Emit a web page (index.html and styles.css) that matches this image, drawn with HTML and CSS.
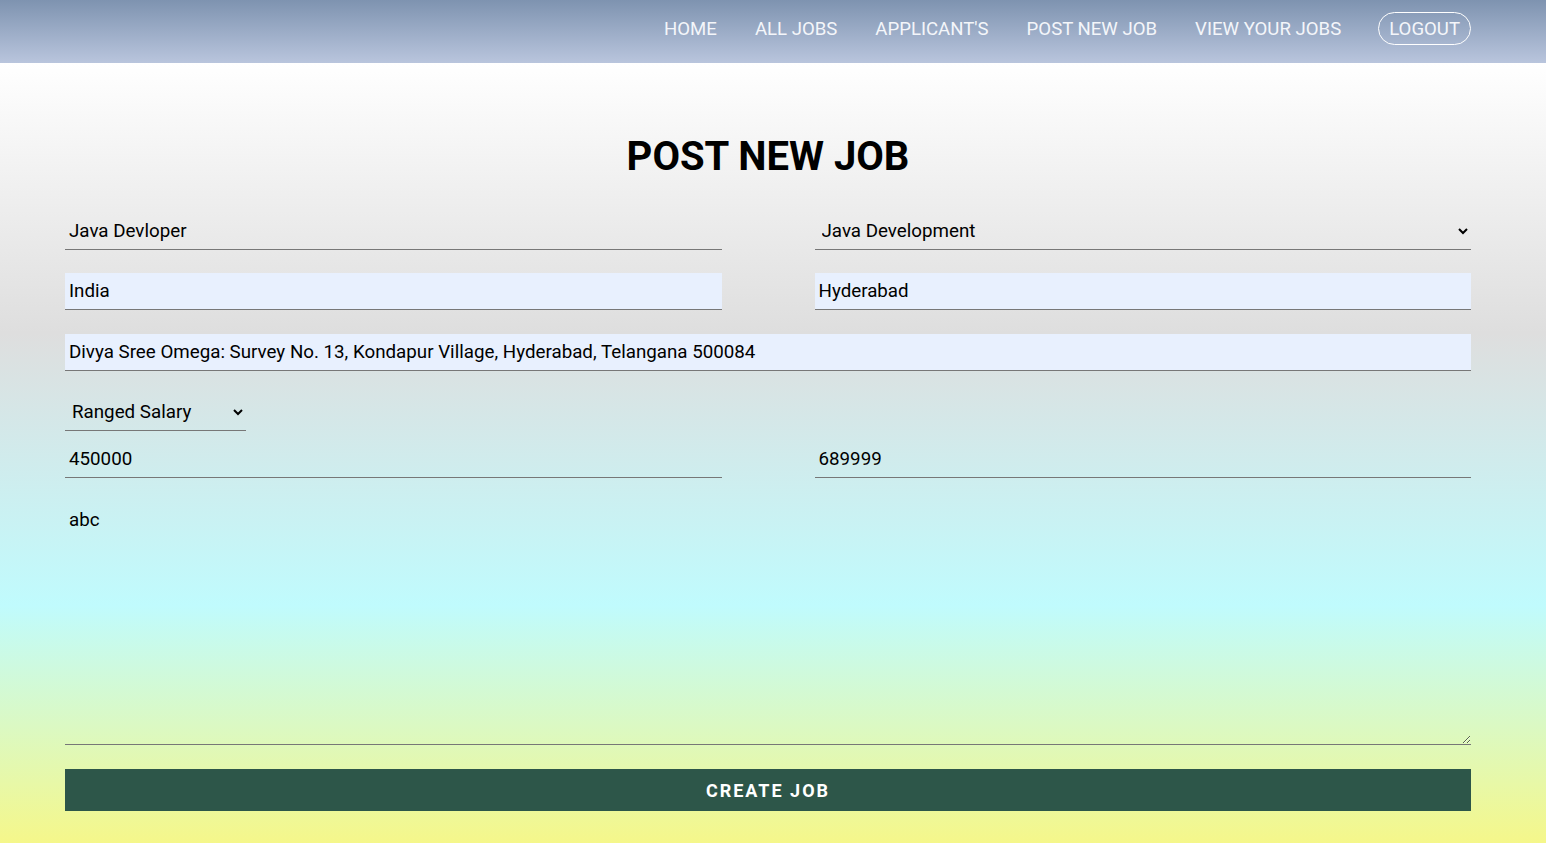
FILE: index.html
```html
<!DOCTYPE html>
<html lang="en">
<head>
<meta charset="utf-8">
<title>Post New Job</title>
<link rel="stylesheet" href="styles.css">
</head>
<body>
<header class="navbar">
  <nav class="nav-links">
    <a class="nav-link" href="#">HOME</a>
    <a class="nav-link" href="#">ALL JOBS</a>
    <a class="nav-link" href="#">APPLICANT'S</a>
    <a class="nav-link" href="#">POST NEW JOB</a>
    <a class="nav-link" href="#">VIEW YOUR JOBS</a>
    <a class="nav-link logout" href="#">LOGOUT</a>
  </nav>
</header>
<main class="page">
  <h1 class="title">POST NEW JOB</h1>
  <form class="job-form">
    <div class="row two">
      <input class="field" type="text" value="Java Devloper">
      <select class="field select">
        <option>Java Development</option>
      </select>
    </div>
    <div class="row two">
      <input class="field autofill" type="text" value="India">
      <input class="field autofill" type="text" value="Hyderabad">
    </div>
    <div class="row address">
      <input class="field autofill" type="text" value="Divya Sree Omega: Survey No. 13, Kondapur Village, Hyderabad, Telangana 500084">
    </div>
    <div class="salary">
      <select class="field select salary-type">
        <option>Ranged Salary</option>
      </select>
      <div class="row two">
        <input class="field" type="text" value="450000">
        <input class="field" type="text" value="689999">
      </div>
    </div>
    <textarea class="field description" autofocus>abc</textarea>
    <button class="submit" type="button">CREATE JOB</button>
  </form>
</main>
</body>
</html>
```

FILE: styles.css
```css
* { box-sizing: border-box; }

html, body {
  margin: 0;
  padding: 0;
  height: 100%;
}

body {
  font-family: Roboto, "Liberation Sans", sans-serif;
  display: flex;
  flex-direction: column;
  background: #f5f78a;
}

.navbar {
  height: 63px;
  flex: none;
  background: linear-gradient(to bottom, #7e93b0 0%, #b9c5dd 100%);
  display: flex;
  align-items: center;
  justify-content: flex-end;
  padding-right: 75px;
}

.nav-links {
  display: flex;
  align-items: center;
  gap: 38px;
  margin-top: -6px;
}

.nav-link {
  color: #f4f6fa;
  text-decoration: none;
  font-size: 18.6px;
}

.logout {
  border: 1px solid #ffffff;
  border-radius: 17px;
  padding: 5px 10px 4px 10px;
  margin-left: -1px;
}

.page {
  flex: 1;
  background: linear-gradient(to bottom, #ffffff 0%, #dedede 34.6%, #c0fbfd 69.5%, #f5f78a 100%);
  padding: 70px 75px 0 65px;
}

.title {
  margin: 0 0 33px 0;
  text-align: center;
  font-size: 40px;
  font-weight: 700;
  line-height: 47px;
  color: #000;
}

.job-form {
  display: flex;
  flex-direction: column;
  gap: 23px;
}

.row {
  display: flex;
}

.row.address {
  margin-top: 1px;
}

.row.two {
  display: grid;
  grid-template-columns: 1fr 1fr;
  column-gap: 93px;
}

.field {
  font-family: Roboto, "Liberation Sans", sans-serif;
  font-size: 18.75px;
  color: #000;
  height: 37px;
  width: 100%;
  border: none;
  border-bottom: 1px solid #777;
  background: transparent;
  padding: 0 4px;
  outline: none;
  border-radius: 0;
}

.autofill {
  background: #e8f0fe;
}

.select {
  padding: 0 2px 0 3px;
}

.salary {
  display: flex;
  flex-direction: column;
  gap: 10px;
}

.salary-type {
  width: 181px;
  height: 37px;
}

.description {
  height: 244px;
  resize: vertical;
  padding: 7px 4px 7px 4px;
  line-height: 24px;
  display: block;
  caret-color: #000;
  margin-bottom: 1px;
}

.submit {
  height: 42px;
  width: 100%;
  border: none;
  background: #2d5649;
  color: #fff;
  font-family: Roboto, "Liberation Sans", sans-serif;
  font-size: 18px;
  font-weight: 700;
  letter-spacing: 2px;
  cursor: pointer;
}
```
